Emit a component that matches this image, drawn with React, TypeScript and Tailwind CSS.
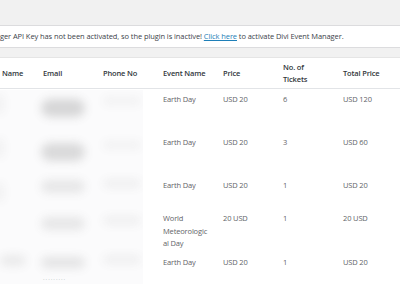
import React from "react";

const rows = [
  { h: 43, ev: ["Earth Day"], price: "USD 20", qty: "6", total: "USD 120" },
  { h: 43, ev: ["Earth Day"], price: "USD 20", qty: "3", total: "USD 60" },
  { h: 33, ev: ["Earth Day"], price: "USD 20", qty: "1", total: "USD 20" },
  { h: 44, ev: ["World", "Meteorologic", "al Day"], price: "20 USD", qty: "1", total: "20 USD" },
  { h: 40, ev: ["Earth Day"], price: "USD 20", qty: "1", total: "USD 20" },
];

const blobs = [
  { x: 41, y: 9, w: 44, h: 18, o: 0.22 },
  { x: 103, y: 7, w: 38, h: 8, o: 0.06 },
  { x: 41, y: 53, w: 44, h: 18, o: 0.2 },
  { x: 103, y: 51, w: 38, h: 8, o: 0.06 },
  { x: 41, y: 90, w: 44, h: 13, o: 0.12 },
  { x: 103, y: 89, w: 38, h: 9, o: 0.07 },
  { x: 41, y: 127, w: 44, h: 13, o: 0.12 },
  { x: 103, y: 126, w: 38, h: 9, o: 0.07 },
  { x: 0, y: 165, w: 26, h: 11, o: 0.1 },
  { x: 41, y: 167, w: 44, h: 11, o: 0.14 },
  { x: 103, y: 165, w: 38, h: 9, o: 0.07 },
  { x: -6, y: 4, w: 10, h: 20, o: 0.06 },
  { x: -6, y: 48, w: 10, h: 20, o: 0.06 },
  { x: -6, y: 92, w: 10, h: 20, o: 0.06 },
];

export default function App() {
  return (
    <div
      className="w-[400px] h-[284px] bg-[#f1f1f1] overflow-hidden text-[7.5px] leading-[12.5px] tracking-[-0.15px]"
      style={{ fontFamily: '"Open Sans", "Noto Sans", sans-serif' }}
    >
      <div className="h-[25px]" />
      <div className="h-[23px] bg-white border-y border-[#dcdcde] flex items-center whitespace-nowrap text-[#3c434a] tracking-[-0.09px]">
        <span>
          ger API Key has not been activated, so the plugin is inactive!{" "}
          <span className="text-[#1e7fb8] underline">Click here</span> to activate Divi Event Manager.
        </span>
      </div>
      <div className="h-[9px]" />
      <div className="relative bg-white border-t border-[#e5e5e5] h-[240px]">
        <div className="grid grid-cols-[35px_60px_60px_60px_60px_60px_65px] h-[31px] items-center border-b border-[#e2e4e7] text-[#32373c] font-semibold">
          <div className="pl-[2px]">Name</div>
          <div className="pl-[8px]">Email</div>
          <div className="pl-[8px]">Phone No</div>
          <div className="pl-[8px]">Event Name</div>
          <div className="pl-[8px]">Price</div>
          <div className="pl-[8px] leading-[12px]">
            No. of
            <br />
            Tickets
          </div>
          <div className="pl-[8px]">Total Price</div>
        </div>
        {rows.map((r, i) => (
          <div
            key={i}
            className="grid grid-cols-[35px_60px_60px_60px_60px_60px_65px] text-[#5f6468] pt-[4px]"
            style={{ height: r.h }}
          >
            <div />
            <div />
            <div />
            <div className="pl-[8px]">
              {r.ev.map((l, j) => (
                <div key={j}>{l}</div>
              ))}
            </div>
            <div className="pl-[8px]">{r.price}</div>
            <div className="pl-[8px]">{r.qty}</div>
            <div className="pl-[8px]">{r.total}</div>
          </div>
        ))}
        <div className="absolute left-0 top-[32px] w-[143px] h-[196px] bg-[#fbfbfc] overflow-hidden">
          {blobs.map((b, i) => (
            <div
              key={i}
              className="absolute rounded-full bg-[#555] blur-[5px]"
              style={{ left: b.x, top: b.y, width: b.w, height: b.h, opacity: b.o }}
            />
          ))}
          <div className="absolute left-[43px] top-[186px] text-[6px] leading-[6px] text-[#9aa] tracking-[1px]">
            ·········
          </div>
        </div>
      </div>
    </div>
  );
}
